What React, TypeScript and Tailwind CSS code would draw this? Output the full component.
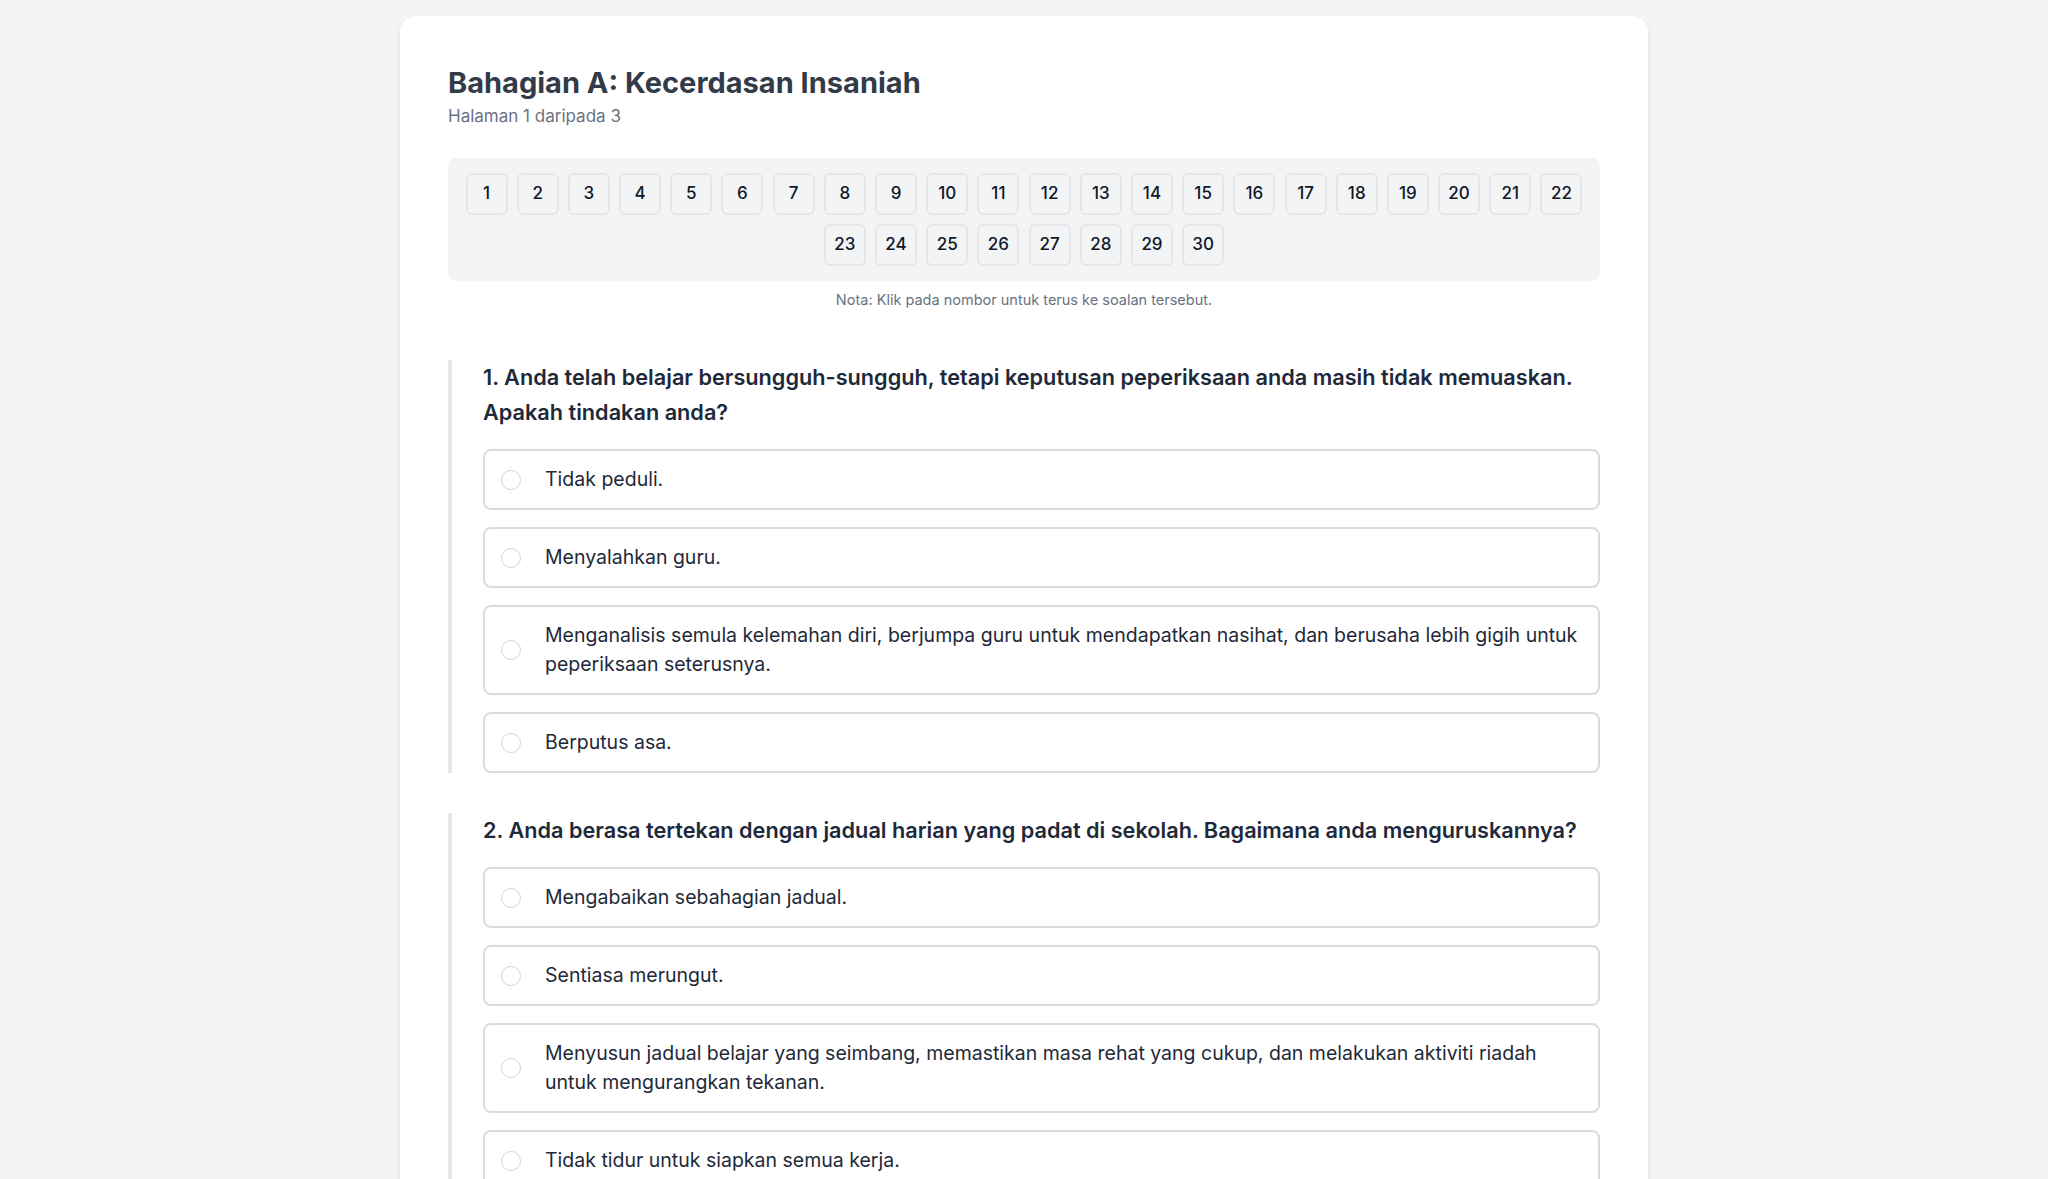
import React from "react";

type Q = { n: number; text: string; options: string[] };

const questions: Q[] = [
  {
    n: 1,
    text: "Anda telah belajar bersungguh-sungguh, tetapi keputusan peperiksaan anda masih tidak memuaskan. Apakah tindakan anda?",
    options: [
      "Tidak peduli.",
      "Menyalahkan guru.",
      "Menganalisis semula kelemahan diri, berjumpa guru untuk mendapatkan nasihat, dan berusaha lebih gigih untuk peperiksaan seterusnya.",
      "Berputus asa.",
    ],
  },
  {
    n: 2,
    text: "Anda berasa tertekan dengan jadual harian yang padat di sekolah. Bagaimana anda menguruskannya?",
    options: [
      "Mengabaikan sebahagian jadual.",
      "Sentiasa merungut.",
      "Menyusun jadual belajar yang seimbang, memastikan masa rehat yang cukup, dan melakukan aktiviti riadah untuk mengurangkan tekanan.",
      "Tidak tidur untuk siapkan semua kerja.",
    ],
  },
];

export default function App() {
  const nums = Array.from({ length: 30 }, (_, i) => i + 1);
  return (
    <div
      className="min-h-screen bg-[#f3f4f6] pt-4"
      style={{ fontFamily: "Inter, 'Noto Sans', sans-serif" }}
    >
      <div className="mx-auto w-[1248px] rounded-2xl bg-white px-12 pt-12 pb-12 shadow-md">
        <h1 className="pt-[2px] text-[29px] font-bold leading-[34px] text-[#343b48]">
          Bahagian A: Kecerdasan Insaniah
        </h1>
        <p className="mt-1 text-[17px] leading-6 text-gray-500">Halaman 1 daripada 3</p>

        <div className="mt-[30px] flex flex-wrap justify-center gap-[9.2px] rounded-lg bg-gray-100 p-[15px]">
          {nums.map((n) => (
            <button
              key={n}
              className="flex h-[42px] w-[42px] items-center justify-center rounded-md border-2 border-[#e4e6ea] bg-[#f3f4f6] text-[17px] font-medium text-gray-900"
            >
              {n}
            </button>
          ))}
        </div>
        <p className="mt-[9px] text-center text-[14.5px] leading-5 text-gray-500">
          Nota: Klik pada nombor untuk terus ke soalan tersebut.
        </p>

        <div className="mt-[50px] flex flex-col gap-10">
          {questions.map((q) => (
            <div key={q.n} className="border-l-4 border-gray-200 pl-[31px]">
              <p className="mb-[19px] text-[21.7px] font-semibold leading-[35px] text-gray-800">
                {`${q.n}. ${q.text}`}
              </p>
              <div className="flex flex-col gap-[17px]">
                {q.options.map((o, i) => (
                  <label
                    key={i}
                    className="flex items-center gap-6 rounded-lg border-2 border-[#d9dbe0] bg-white px-4 py-[14px]"
                  >
                    <span className="h-5 w-5 shrink-0 rounded-full border border-gray-300 bg-white" />
                    <span className="text-[19.5px] leading-[29px] text-gray-800">{o}</span>
                  </label>
                ))}
              </div>
            </div>
          ))}
        </div>
      </div>
    </div>
  );
}
